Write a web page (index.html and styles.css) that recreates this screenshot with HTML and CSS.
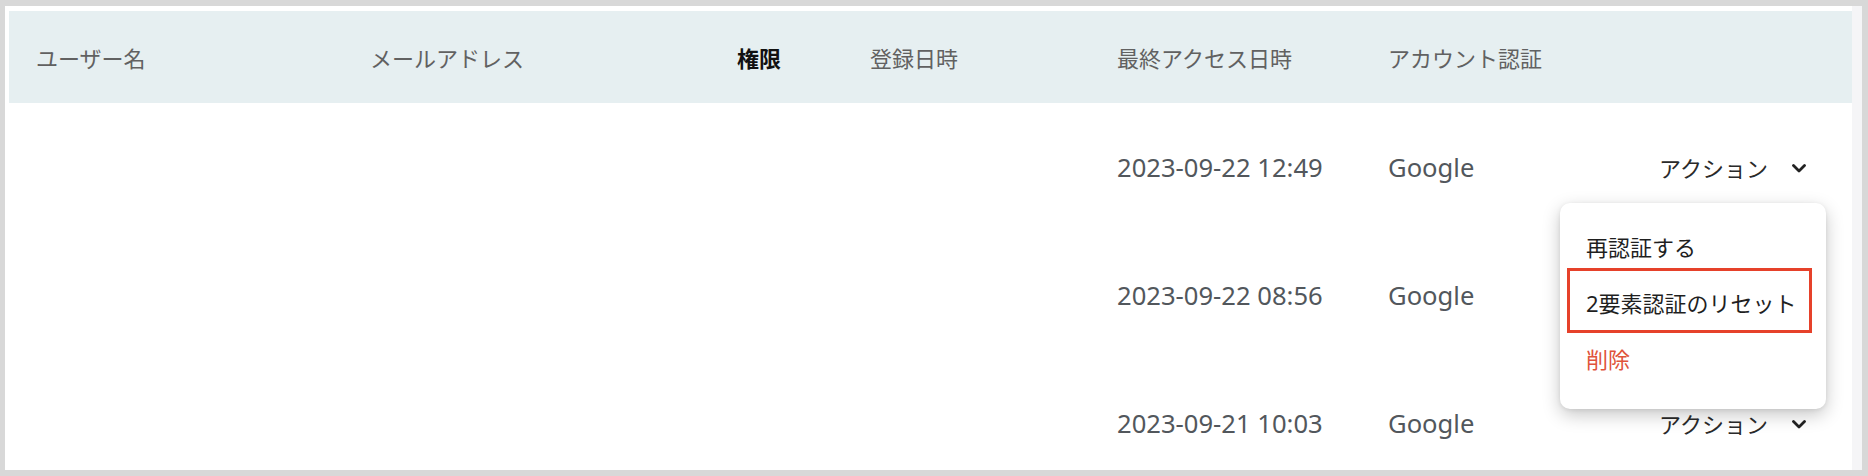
FILE: index.html
```html
<!DOCTYPE html>
<html lang="ja">
<head>
<meta charset="utf-8">
<title>ユーザー一覧</title>
<link rel="stylesheet" href="styles.css">
</head>
<body>
<div class="frame">
  <div class="card">
    <div class="content">
      <div class="table">
        <div class="row head">
          <div class="cell">ユーザー名</div>
          <div class="cell">メールアドレス</div>
          <div class="cell strong">権限</div>
          <div class="cell">登録日時</div>
          <div class="cell">最終アクセス日時</div>
          <div class="cell">アカウント認証</div>
          <div class="cell"></div>
        </div>
        <div class="row body">
          <div class="cell"></div>
          <div class="cell"></div>
          <div class="cell"></div>
          <div class="cell"></div>
          <div class="cell latin">2023-09-22 12:49</div>
          <div class="cell latin">Google</div>
          <div class="cell action">
            <span class="action-btn">アクション
              <svg class="chev" width="14" height="9" viewBox="0 0 14 9"><polyline points="1.5,1.5 7,7 12.5,1.5" fill="none" stroke="#222" stroke-width="2.8" stroke-linecap="round" stroke-linejoin="round"/></svg>
            </span>
          </div>
        </div>
        <div class="row body">
          <div class="cell"></div>
          <div class="cell"></div>
          <div class="cell"></div>
          <div class="cell"></div>
          <div class="cell latin">2023-09-22 08:56</div>
          <div class="cell latin">Google</div>
          <div class="cell action">
            <span class="action-btn">アクション
              <svg class="chev" width="14" height="9" viewBox="0 0 14 9"><polyline points="1.5,1.5 7,7 12.5,1.5" fill="none" stroke="#222" stroke-width="2.8" stroke-linecap="round" stroke-linejoin="round"/></svg>
            </span>
          </div>
        </div>
        <div class="row body">
          <div class="cell"></div>
          <div class="cell"></div>
          <div class="cell"></div>
          <div class="cell"></div>
          <div class="cell latin">2023-09-21 10:03</div>
          <div class="cell latin">Google</div>
          <div class="cell action">
            <span class="action-btn">アクション
              <svg class="chev" width="14" height="9" viewBox="0 0 14 9"><polyline points="1.5,1.5 7,7 12.5,1.5" fill="none" stroke="#222" stroke-width="2.8" stroke-linecap="round" stroke-linejoin="round"/></svg>
            </span>
          </div>
        </div>
      </div>
      <div class="menu">
        <div class="menu-item">再認証する</div>
        <div class="menu-item highlighted">2要素認証のリセット<span class="mark"></span></div>
        <div class="menu-item danger">削除</div>
      </div>
    </div>
    <div class="track"></div>
  </div>
</div>
</body>
</html>
```
FILE: styles.css
```css
* { box-sizing: border-box; }
html, body {
  margin: 0;
  padding: 0;
  background: #d8d8d8;
}
body {
  font-family: "Noto Sans", "Noto Sans CJK JP", sans-serif;
  width: 1868px;
  height: 476px;
  overflow: hidden;
}
.frame {
  height: 476px;
  padding: 6px 6px 6px 5px;
}
.card {
  display: flex;
  height: 464px;
  background: #ffffff;
  overflow: hidden;
}
.content {
  position: relative;
  flex: 1;
  padding: 5px 0 0 4px;
}
.track {
  width: 10px;
  background: #f5f5f7;
}
.table {
  display: flex;
  flex-direction: column;
}
.row {
  display: grid;
  grid-template-columns: 334px 367px 133px 247px 271px 200px 1fr;
  padding-left: 27px;
  align-items: center;
}
.row.head {
  height: 92px;
  background: #e6eff1;
}
.row.body {
  height: 128px;
}
.cell {
  font-size: 22px;
  color: #626466;
  white-space: nowrap;
}
.head .cell {
  color: #616161;
}
.head .cell.strong {
  color: #111111;
  font-weight: 700;
}
.cell.latin {
  font-size: 25.6px;
  color: #52575c;
}
.cell.action {
  display: flex;
  justify-content: flex-end;
  padding-right: 46px;
}
.action-btn {
  display: inline-flex;
  align-items: center;
  gap: 24px;
  font-size: 22px;
  color: #2a2a2a;
}
.chev {
  display: block;
  margin-top: 2px;
}
.menu {
  position: absolute;
  left: 1555px;
  top: 197px;
  width: 266px;
  height: 206px;
  background: #ffffff;
  border-radius: 10px;
  box-shadow: 0 6px 18px rgba(0, 0, 0, 0.22), 0 1px 4px rgba(0, 0, 0, 0.08);
  padding: 15px 0 0 0;
}
.menu-item {
  position: relative;
  height: 56px;
  display: flex;
  align-items: center;
  padding-left: 26px;
  font-size: 22px;
  color: #1f1f1f;
  white-space: nowrap;
}
.menu-item.danger {
  color: #e0533b;
}
.mark {
  position: absolute;
  left: 7px;
  right: 14px;
  top: -6px;
  bottom: -3px;
  border: 3px solid #e6412a;
}
```
